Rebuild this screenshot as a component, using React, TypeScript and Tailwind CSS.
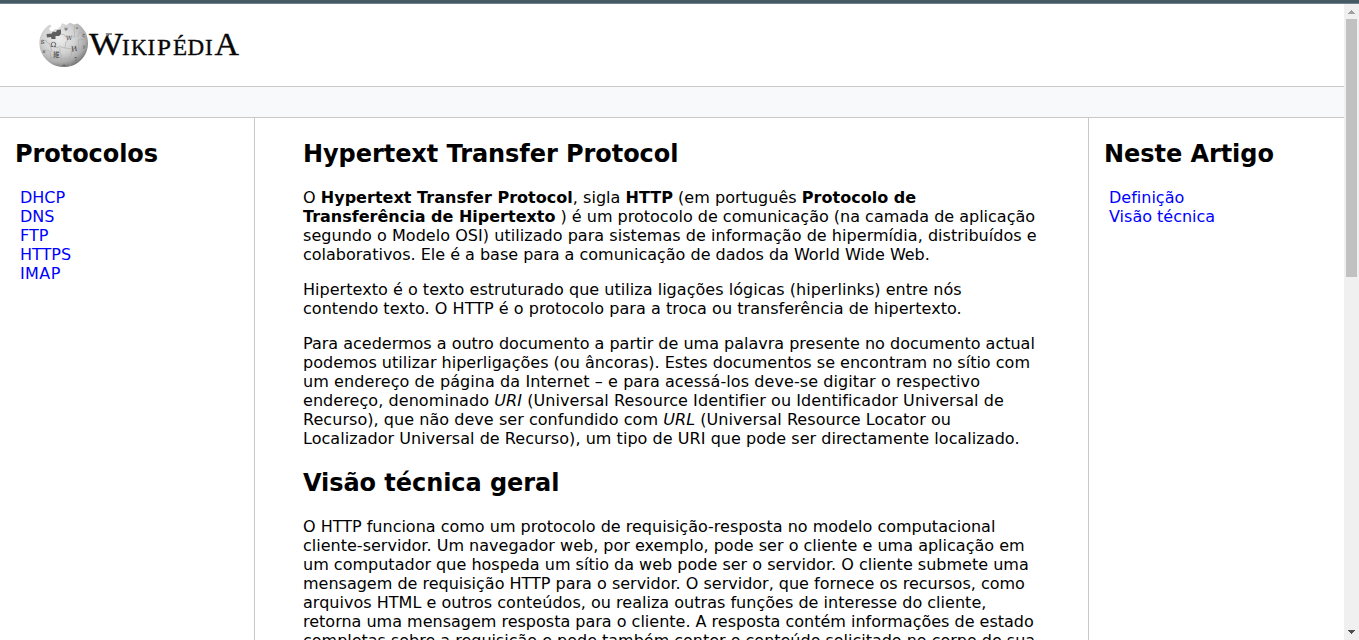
import type { ReactNode } from "react";

const protocols = ["DHCP", "DNS", "FTP", "HTTPS", "IMAP"];
const sections = ["Definição", "Visão técnica"];

function Heading({ children }: { children: ReactNode }) {
  return <h2 className="mb-5 text-[24px] leading-[28px] font-bold tracking-[-0.06px] whitespace-nowrap">{children}</h2>;
}

function Links({ items }: { items: string[] }) {
  return (
    <ul className="pl-[5px]">
      {items.map((item) => (
        <li key={item}>
          <a href="#" className={item === "IMAP" ? "tracking-[0.4px] text-[#0000ff]" : "text-[#0000ff]"}>{item}</a>
        </li>
      ))}
    </ul>
  );
}

function Line({ children, className = "" }: { children: ReactNode; className?: string }) {
  return <span className={`block ${className}`}>{children}</span>;
}

function Logo() {
  return (
    <svg width="204" height="50" viewBox="38 20 204 50" role="img" aria-label="Wikipédia" className="block">
      <defs>
        <radialGradient id="globe" cx="0.4" cy="0.35" r="0.68">
          <stop offset="0" stopColor="#eeeeee" />
          <stop offset="0.5" stopColor="#d2d2d2" />
          <stop offset="0.8" stopColor="#adadad" />
          <stop offset="1" stopColor="#747474" />
        </radialGradient>
      </defs>
      <path d="M50 24.5 C43.5 28.5 39.4 35 39.4 43 C39.4 56.5 50.5 67 64 67 C77.5 67 88 56.5 88 43 C88 34.5 84 28 77.5 23.5 L74 24.5 L70 22.8 L66.5 25 L62 23.2 L60.5 26.5 L57.5 29 L54.5 29 L53 32 L50.5 31 L49 28.5 L51.5 26.5 Z" fill="url(#globe)" />
      <path d="M46.5 34 L52 33.5 L52.5 31.5 L56 32 L57 30 L61 29.5 L61 34 L59 36 L55.5 36 L55.5 39 L51.5 39 L51 37 L47 37.5 Z" fill="#606060" />
      <g fill="none" stroke="#a7a7a7" strokeWidth="0.6">
        <path d="M61 34 L65 35 Q65 38 67 37 Q69 35 70 37 L75 37 L74 30 Q76 28 74 26" />
        <path d="M41 41 L46 40 Q46 43 48 43 Q50 42 50 46 L58 48 Q59 45 61 47 L65 48 L66 42 Q69 41 67 39" />
        <path d="M43 51 L48 50 Q50 53 52 51 L50 46 M50 52 L51 58 Q48 60 52 62" />
        <path d="M60 48 L60 54 Q63 55 61 57 L62 65 M65 48 L72 49 Q73 46 75 49 L79 48 L78 40 L86 39" />
        <path d="M72 50 L71 56 Q68 57 71 59 L70 66 M79 49 L83 51 L87 48 M77 37 L80 32 L85 34" />
        <path d="M51 58 L57 59 Q58 56 61 59 L70 59 L78 58" />
      </g>
      <g fill="#404040" fontFamily="'DejaVu Serif', serif" textAnchor="middle">
        <text x="53.5" y="46.5" fontSize="7">Ω</text>
        <text x="69" y="40" fontSize="6">W</text>
        <text x="74.2" y="51" fontSize="7" transform="rotate(-8 74 49)">И</text>
        <text x="56.5" y="57.3" fontSize="6.3" fontFamily="'Noto Sans CJK JP', sans-serif">維</text>
        <text x="66" y="29.5" fontSize="5">ψ</text>
        <text x="42.7" y="44" fontSize="5.5">ß</text>
        <text x="44" y="53" fontSize="4.5">н</text>
        <text x="75.5" y="60.5" fontSize="5">7</text>
        <text x="83" y="36" fontSize="5">ج</text>
        <text x="84" y="47.5" fontSize="4.5">y</text>
        <text x="77" y="28.5" fontSize="3.5">n</text>
        <text x="64" y="65.5" fontSize="3.5">ω</text>
      </g>
      <g fill="#080808" stroke="#080808" strokeWidth="0.35" fontFamily="'Liberation Serif', serif">
        <text x="89" y="54.5" fontSize="32" textLength="34" lengthAdjust="spacingAndGlyphs">W</text>
        <path d="M106.2 40 L108.6 34.6 M105.8 34 H112" fill="none" strokeWidth="0.9" />
        <text x="122" y="55" fontSize="23">I</text>
        <text x="131" y="55" fontSize="23" textLength="16" lengthAdjust="spacingAndGlyphs">K</text>
        <text x="147.5" y="55" fontSize="23">I</text>
        <text x="157" y="55" fontSize="23" textLength="14" lengthAdjust="spacingAndGlyphs">P</text>
        <text x="173" y="55" fontSize="23">É</text>
        <text x="187.5" y="55" fontSize="23">D</text>
        <text x="205" y="55" fontSize="23">I</text>
        <text x="214.5" y="55" fontSize="32" textLength="24.5" lengthAdjust="spacingAndGlyphs">A</text>
      </g>
    </svg>
  );
}

export default function App() {
  return (
    <div className="flex h-[640px] w-full flex-col overflow-hidden bg-white font-['DejaVu_Sans',sans-serif] text-[16px] leading-[19px] text-black [font-variant-ligatures:none]">
      <div className="h-1 shrink-0 border-b border-[#708087] bg-[#455a64]" />
      <div className="flex min-h-0 flex-1">
        <div className="flex min-w-0 flex-1 flex-col">
          <header className="h-[83px] shrink-0 border-b border-[#c8c8c8] pt-4 pl-[38px]">
            <Logo />
          </header>
          <nav className="h-[31px] shrink-0 border-b border-[#c8c8c8] bg-[#f8f9fb]" />
          <div className="flex min-h-0 flex-1">
            <aside className="w-[255px] shrink-0 border-r border-[#c8c8c8] pt-[22px] pl-[15px]">
              <Heading>Protocolos</Heading>
              <Links items={protocols} />
            </aside>
            <main className="min-w-0 flex-1 overflow-hidden pt-[22px] pl-12">
              <article className="w-[760px] whitespace-nowrap">
                <Heading>Hypertext Transfer Protocol</Heading>
                <p className="mb-4">
                  <Line className="tracking-[0.03px]">O <b>Hypertext Transfer Protocol</b>, sigla <b>HTTP</b> (em português <b>Protocolo de</b></Line>
                  <Line><b>Transferência de Hipertexto</b> ) é um protocolo de comunicação (na camada de aplicação</Line>
                  <Line className="tracking-[0.045px]">segundo o Modelo OSI) utilizado para sistemas de informação de hipermídia, distribuídos e</Line>
                  <Line>colaborativos. Ele é a base para a comunicação de dados da World Wide Web.</Line>
                </p>
                <p className="mb-4">
                  <Line className="tracking-[0.036px]">Hipertexto é o texto estruturado que utiliza ligações lógicas (hiperlinks) entre nós</Line>
                  <Line className="tracking-[0.037px]">contendo texto. O HTTP é o protocolo para a troca ou transferência de hipertexto.</Line>
                </p>
                <p className="mb-[20px]">
                  <Line>Para acedermos a outro documento a partir de uma palavra presente no documento actual</Line>
                  <Line className="tracking-[0.012px]">podemos utilizar hiperligações (ou âncoras). Estes documentos se encontram no sítio com</Line>
                  <Line className="tracking-[0.085px]">um endereço de página da Internet – e para acessá-los deve-se digitar o respectivo</Line>
                  <Line className="tracking-[0.07px]">endereço, denominado <i>URI</i> (Universal Resource Identifier ou Identificador Universal de</Line>
                  <Line className="tracking-[0.05px]">Recurso), que não deve ser confundido com <i>URL</i> (Universal Resource Locator ou</Line>
                  <Line className="tracking-[0.048px]">Localizador Universal de Recurso), um tipo de URI que pode ser directamente localizado.</Line>
                </p>
                <div className="pt-px">
                  <Heading>Visão técnica geral</Heading>
                </div>
                <p>
                  <Line>O HTTP funciona como um protocolo de requisição-resposta no modelo computacional</Line>
                  <Line className="tracking-[0.012px]">cliente-servidor. Um navegador web, por exemplo, pode ser o cliente e uma aplicação em</Line>
                  <Line className="tracking-[0.01px]">um computador que hospeda um sítio da web pode ser o servidor. O cliente submete uma</Line>
                  <Line>mensagem de requisição HTTP para o servidor. O servidor, que fornece os recursos, como</Line>
                  <Line className="tracking-[0.024px]">arquivos HTML e outros conteúdos, ou realiza outras funções de interesse do cliente,</Line>
                  <Line>retorna uma mensagem resposta para o cliente. A resposta contém informações de estado</Line>
                  <Line className="tracking-[-0.012px]">completas sobre a requisição e pode também conter o conteúdo solicitado no corpo de sua</Line>
                </p>
              </article>
            </main>
            <aside className="w-[256px] shrink-0 border-l border-[#c8c8c8] pt-[22px] pl-[15px]">
              <Heading>Neste Artigo</Heading>
              <Links items={sections} />
            </aside>
          </div>
        </div>
        <div className="flex w-[15px] shrink-0 flex-col items-center bg-[#f0f0f0]">
          <svg width="15" height="15" viewBox="0 0 15 15" className="shrink-0" shapeRendering="crispEdges">
            <path d="M4 10 L7.5 6 L11 10 Z" fill="#a0a0a0" />
          </svg>
          <div className="h-[258px] w-[11px] bg-[#c1c1c1]" />
          <svg width="15" height="15" viewBox="0 0 15 15" className="mt-auto shrink-0" shapeRendering="crispEdges">
            <path d="M4 5 L11 5 L7.5 9 Z" fill="#505050" />
          </svg>
        </div>
      </div>
    </div>
  );
}
